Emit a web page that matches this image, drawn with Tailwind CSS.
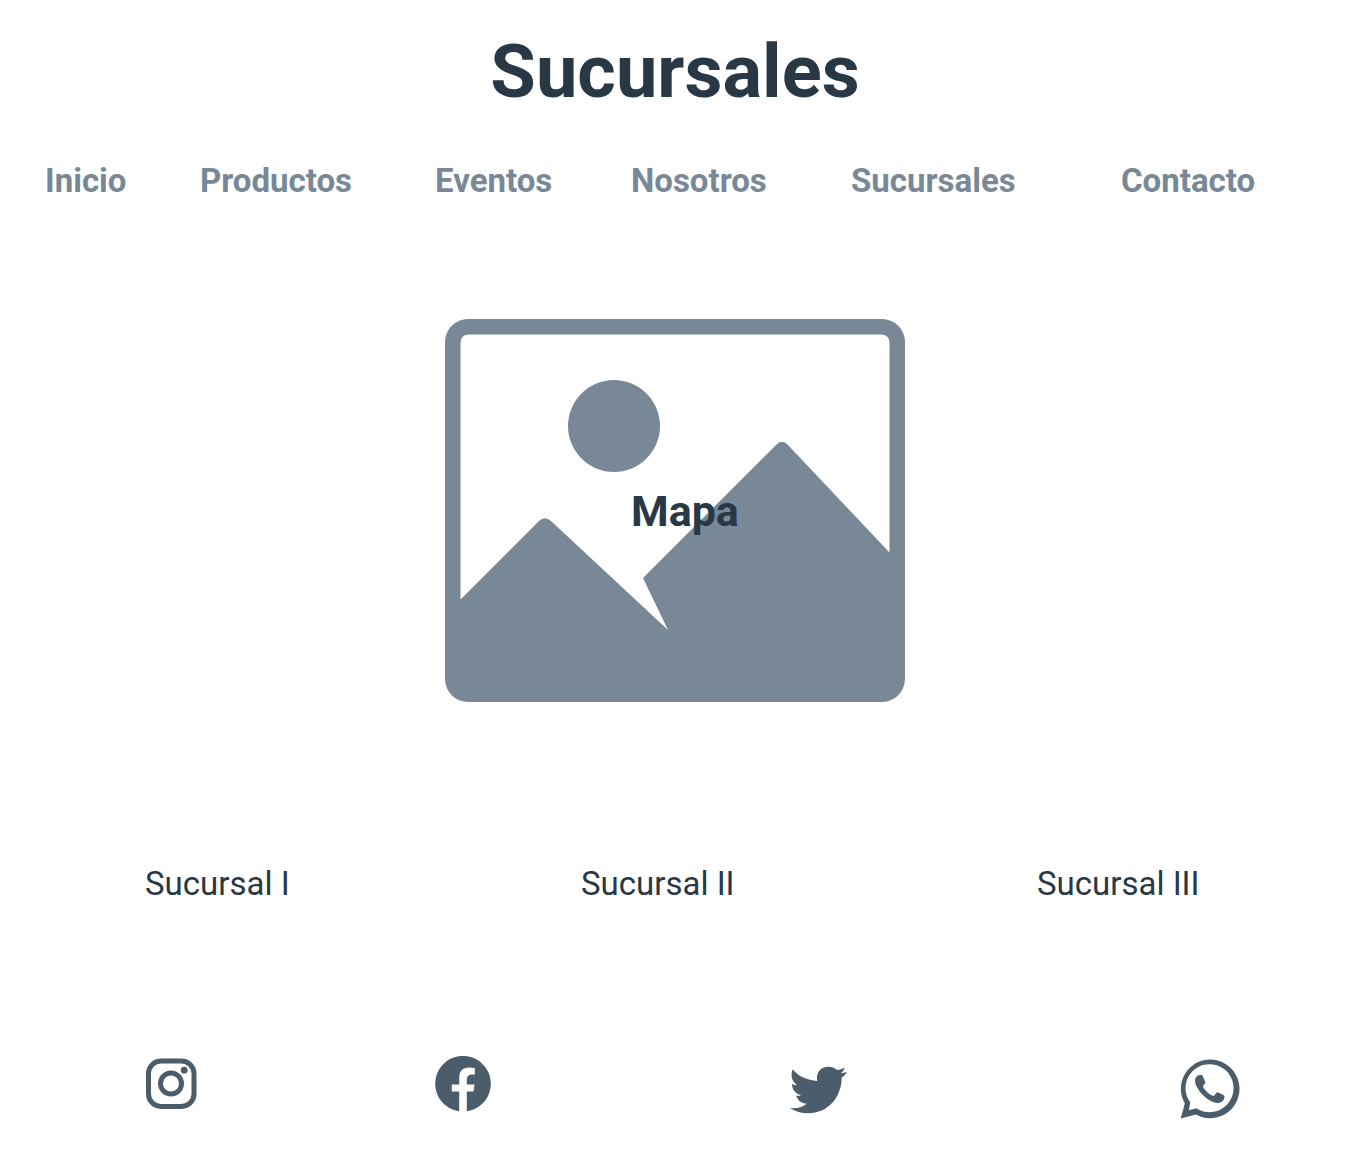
<!DOCTYPE html>
<html lang="es">
<head>
<meta charset="utf-8">
<meta name="viewport" content="width=device-width, initial-scale=1">
<title>Sucursales</title>
<script src="https://cdn.jsdelivr.net/npm/@tailwindcss/browser@4"></script>
</head>
<body class="min-h-screen bg-white font-['Roboto',sans-serif] text-[#283845]">
<header>
  <h1 class="pt-7 text-center text-[74px] leading-[88px] font-bold">Sucursales</h1>
  <nav aria-label="Principal" class="mt-[45px] grid grid-cols-[155fr_235fr_196fr_220fr_270fr_229fr] pl-[45px] text-[33px] leading-10 font-bold text-[#788896]">
    <a href="#inicio" class="justify-self-start">Inicio</a>
    <a href="#productos" class="justify-self-start">Productos</a>
    <a href="#eventos" class="justify-self-start">Eventos</a>
    <a href="#nosotros" class="justify-self-start">Nosotros</a>
    <a href="#sucursales" class="justify-self-start">Sucursales</a>
    <a href="#contacto" class="justify-self-start">Contacto</a>
  </nav>
</header>
<main>
  <figure class="relative mx-auto mt-[118px] w-[460px]">
    <svg viewBox="0 0 460 383" class="block w-full" fill="#788896" aria-hidden="true">
      <path fill-rule="evenodd" d="M23 0H437A23 23 0 0 1 460 23V360A23 23 0 0 1 437 383H23A23 23 0 0 1 0 360V23A23 23 0 0 1 23 0ZM24 15.500Q15.500 15.500 15.500 24V280.500L94 202Q99.500 196.500 106 202L223 311L198 259L331 126Q337 119.500 343 126L444.500 233.500V24Q444.500 15.500 436 15.500Z"/>
      <circle cx="169" cy="107" r="46"/>
    </svg>
    <figcaption class="absolute top-[166px] left-[186px] text-[43px] leading-[52px] font-bold">Mapa</figcaption>
  </figure>
  <ul class="mt-[162px] grid grid-cols-[436fr_456fr_313fr] pl-[145px] text-[33px] leading-10">
    <li>Sucursal I</li>
    <li>Sucursal II</li>
    <li>Sucursal III</li>
  </ul>
</main>
<footer class="mt-[152px] grid grid-cols-[290fr_355fr_390fr_170fr] items-start pb-8 pl-[145px] text-[#4b5c6b]">
  <a href="#instagram" aria-label="Instagram" class="mt-0.5 justify-self-start">
    <svg class="block size-[52px]" viewBox="0 0 52 52" fill="none" stroke="currentColor" stroke-width="5">
      <rect x="3.500" y="3" width="45.500" height="45.500" rx="12.500"/>
      <circle cx="26" cy="25.500" r="10.500"/>
      <circle cx="39.200" cy="12.200" r="3.400" fill="currentColor" stroke="none"/>
    </svg>
  </a>
  <a href="#facebook" aria-label="Facebook" class="justify-self-start">
    <svg class="block size-14" viewBox="0 0 56 56" fill="currentColor">
      <path d="M24.200 55.300A27.800 27.800 0 1 1 31.800 55.300V35.500H38.500L39.500 28.500H31.800V24Q31.800 18.500 37 18.500H39.800V12Q37 11.500 34.500 11.500C27.500 11.500 24.200 15.500 24.200 22V28.500H16.800V35.500H24.200Z"/>
    </svg>
  </a>
  <a href="#twitter" aria-label="Twitter" class="mt-2.5 justify-self-start">
    <svg class="block h-12 w-[57px]" viewBox="30 46 172 145" fill="currentColor">
      <path d="M38 56C55 77 82 90 112 91C108 66 122 48 146 48C158 48 166 52 172 58C180 57 188 54 195 51C193 59 188 64 183 68C190 67 196 66 202 64C198 71 192 77 186 81C186 140 145 189 85 189C65 189 45 184 30 173C50 175 67 171 80 160C65 159 53 150 48 135C53 136 59 136 63 134C47 130 36 117 36 100C41 102 46 104 51 104C35 92 31 74 38 56Z"/>
    </svg>
  </a>
  <a href="#whatsapp" aria-label="WhatsApp" class="mt-[3px] justify-self-start">
    <svg class="block size-[60px]" viewBox="0 0 60 60" fill="currentColor">
      <path fill-rule="evenodd" d="M0.700 59.500L4.800 44.500A29.300 29.300 0 1 1 16 55.500ZM8.800 51.300L16.500 49.300A24 24 0 1 0 10.300 43.500Z"/>
      <path d="M18.500 16.200C16.500 17 14.700 19.300 15 22.300C15.600 27.500 19.500 33 24.500 37.500C29.500 42 35.500 44.700 39.500 43.700C42.500 43 44.500 40.500 44.500 37.500Q44.500 36.700 43.800 36.300L38.200 33.500Q37.200 33 36.500 33.800L34.300 36.500Q33.700 37.200 32.800 36.800C28.500 35 25 31.500 23.100 28Q22.700 27.300 23.200 26.700L25 24.500Q25.500 23.900 25.200 23.100L22.700 17.100Q22.300 16.200 21.400 16.100Q19.500 15.900 18.500 16.200Z"/>
    </svg>
  </a>
</footer>
</body>
</html>
